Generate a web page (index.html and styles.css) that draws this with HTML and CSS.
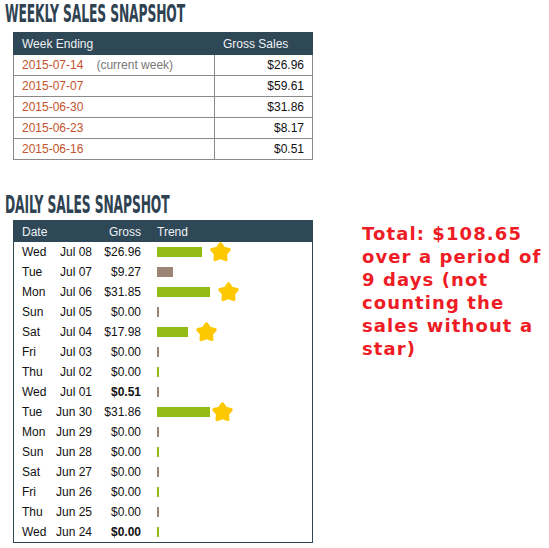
FILE: index.html
```html
<!DOCTYPE html>
<html>
<head>
<meta charset="utf-8">
<link rel="stylesheet" href="styles.css">
</head>
<body>
<div class="page">
  <div class="left">
    <h2 class="title"><span>WEEKLY SALES SNAPSHOT</span></h2>
    <table class="weekly">
      <thead>
        <tr><th class="wk">Week Ending</th><th class="gs">Gross Sales</th></tr>
      </thead>
      <tbody>
        <tr><td class="wk"><span class="date">2015-07-14</span><span class="cur">(current week)</span></td><td class="gs">$26.96</td></tr>
        <tr><td class="wk"><span class="date">2015-07-07</span></td><td class="gs">$59.61</td></tr>
        <tr><td class="wk"><span class="date">2015-06-30</span></td><td class="gs">$31.86</td></tr>
        <tr><td class="wk"><span class="date">2015-06-23</span></td><td class="gs">$8.17</td></tr>
        <tr><td class="wk"><span class="date">2015-06-16</span></td><td class="gs">$0.51</td></tr>
      </tbody>
    </table>

    <h2 class="title daily-title"><span>DAILY SALES SNAPSHOT</span></h2>
    <table class="daily">
      <thead>
        <tr><th class="day">Date</th><th class="dt"></th><th class="gross">Gross</th><th class="trend">Trend</th></tr>
      </thead>
      <tbody>
        <tr><td class="day">Wed</td><td class="dt">Jul 08</td><td class="gross">$26.96</td><td class="trend"><div class="tc"><span class="bar g" style="width:45px"></span><svg class="star" viewBox="0 0 20 20"><polygon points="10,2.6 12.6,6.4 17.4,7.6 14.2,11.3 14.6,16.1 10,14.3 5.4,16.1 5.8,11.3 2.6,7.6 7.4,6.4"/></svg></div></td></tr>
        <tr><td class="day">Tue</td><td class="dt">Jul 07</td><td class="gross">$9.27</td><td class="trend"><div class="tc"><span class="bar b" style="width:16px"></span></div></td></tr>
        <tr><td class="day">Mon</td><td class="dt">Jul 06</td><td class="gross">$31.85</td><td class="trend"><div class="tc"><span class="bar g" style="width:53px"></span><svg class="star" viewBox="0 0 20 20"><polygon points="10,2.6 12.6,6.4 17.4,7.6 14.2,11.3 14.6,16.1 10,14.3 5.4,16.1 5.8,11.3 2.6,7.6 7.4,6.4"/></svg></div></td></tr>
        <tr><td class="day">Sun</td><td class="dt">Jul 05</td><td class="gross">$0.00</td><td class="trend"><div class="tc"><span class="bar b" style="width:2px"></span></div></td></tr>
        <tr><td class="day">Sat</td><td class="dt">Jul 04</td><td class="gross">$17.98</td><td class="trend"><div class="tc"><span class="bar g" style="width:31px"></span><svg class="star" viewBox="0 0 20 20"><polygon points="10,2.6 12.6,6.4 17.4,7.6 14.2,11.3 14.6,16.1 10,14.3 5.4,16.1 5.8,11.3 2.6,7.6 7.4,6.4"/></svg></div></td></tr>
        <tr><td class="day">Fri</td><td class="dt">Jul 03</td><td class="gross">$0.00</td><td class="trend"><div class="tc"><span class="bar b" style="width:2px"></span></div></td></tr>
        <tr><td class="day">Thu</td><td class="dt">Jul 02</td><td class="gross">$0.00</td><td class="trend"><div class="tc"><span class="bar g" style="width:2px"></span></div></td></tr>
        <tr><td class="day">Wed</td><td class="dt">Jul 01</td><td class="gross strong">$0.51</td><td class="trend"><div class="tc"><span class="bar b" style="width:2px"></span></div></td></tr>
        <tr><td class="day">Tue</td><td class="dt">Jun 30</td><td class="gross">$31.86</td><td class="trend"><div class="tc"><span class="bar g" style="width:53px"></span><svg class="star tight" viewBox="0 0 20 20"><polygon points="10,2.6 12.6,6.4 17.4,7.6 14.2,11.3 14.6,16.1 10,14.3 5.4,16.1 5.8,11.3 2.6,7.6 7.4,6.4"/></svg></div></td></tr>
        <tr><td class="day">Mon</td><td class="dt">Jun 29</td><td class="gross">$0.00</td><td class="trend"><div class="tc"><span class="bar b" style="width:2px"></span></div></td></tr>
        <tr><td class="day">Sun</td><td class="dt">Jun 28</td><td class="gross">$0.00</td><td class="trend"><div class="tc"><span class="bar g" style="width:2px"></span></div></td></tr>
        <tr><td class="day">Sat</td><td class="dt">Jun 27</td><td class="gross">$0.00</td><td class="trend"><div class="tc"><span class="bar b" style="width:2px"></span></div></td></tr>
        <tr><td class="day">Fri</td><td class="dt">Jun 26</td><td class="gross">$0.00</td><td class="trend"><div class="tc"><span class="bar g" style="width:2px"></span></div></td></tr>
        <tr><td class="day">Thu</td><td class="dt">Jun 25</td><td class="gross">$0.00</td><td class="trend"><div class="tc"><span class="bar b" style="width:2px"></span></div></td></tr>
        <tr><td class="day">Wed</td><td class="dt">Jun 24</td><td class="gross strong">$0.00</td><td class="trend"><div class="tc"><span class="bar g" style="width:2px"></span></div></td></tr>
      </tbody>
    </table>
  </div>
  <p class="note">Total: $108.65 over a period of 9 days (not counting the sales without a star)</p>
</div>
</body>
</html>
```

FILE: styles.css
```css
html, body {
  margin: 0;
  padding: 0;
  background: #ffffff;
}

.page {
  display: flex;
  align-items: flex-start;
  padding-left: 5px;
  font-family: "Liberation Sans", Arial, sans-serif;
  font-size: 12px;
  color: #111;
}

.left {
  width: 308px;
  display: flex;
  flex-direction: column;
}

.title {
  margin: 0;
  height: 28px;
  line-height: 28px;
  font-family: "DejaVu Sans Condensed", "DejaVu Sans", sans-serif;
  font-stretch: condensed;
  font-weight: bold;
  font-size: 24px;
  color: #2f4252;
  white-space: nowrap;
}

.title span {
  display: inline-block;
  transform: scaleX(0.57);
  transform-origin: left center;
  letter-spacing: -0.2px;
}

.weekly {
  margin-left: 8px;
  margin-top: 4px;
  width: 300px;
  border-collapse: collapse;
  table-layout: fixed;
}

.weekly th {
  background: #2f4858;
  color: #eef2f4;
  font-weight: normal;
  text-align: left;
  height: 21px;
  padding: 0 0 0 8px;
  border: 1px solid #2f4858;
}

.weekly th.wk { width: 192px; }

.weekly td {
  height: 20px;
  padding: 0 8px;
  border: 1px solid #8a8a8a;
}

.weekly td.gs { text-align: right; }

.date { color: #c4522c; }
.cur { color: #777; margin-left: 13px; }

.daily-title {
  margin-top: 31px;
}

.daily {
  margin-left: 8px;
  margin-top: 1px;
  width: 300px;
  border-collapse: collapse;
  table-layout: fixed;
  border: 1px solid #2f4858;
}

.daily th {
  background: #2f4858;
  color: #eef2f4;
  font-weight: normal;
  height: 21px;
  padding: 0;
}

.daily td {
  height: 20px;
  padding: 0;
}

.daily .day { width: 28px; padding-left: 8px; text-align: left; }
.daily .dt { width: 42px; text-align: right; }
.daily .gross { width: 49px; text-align: right; }
.daily .trend { padding-left: 16px; text-align: left; }

.tc {
  display: flex;
  align-items: center;
  height: 20px;
}

.strong { font-weight: bold; }

.bar {
  display: block;
  height: 10px;
}

.bar.g { background: #93bb16; }
.bar.b { background: #9c8477; }

.star {
  width: 23px;
  height: 23px;
  margin: -2px 0 -2px 7px;
  fill: #fdc800;
  stroke: #fdc800;
  stroke-width: 3;
  stroke-linejoin: round;
}

.star.tight { margin-left: 1px; }

.note {
  margin: 222px 0 0 49px;
  width: 190px;
  font-family: "DejaVu Sans", Verdana, sans-serif;
  font-weight: bold;
  font-size: 18px;
  line-height: 23px;
  letter-spacing: 1.1px;
  color: #ee1c25;
}
```
